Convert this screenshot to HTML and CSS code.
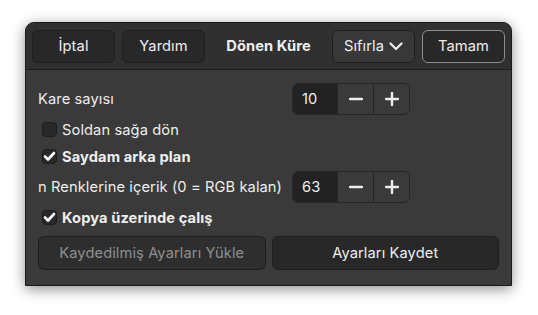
FILE: index.html
```html
<!DOCTYPE html>
<html lang="tr">
<head>
  <meta charset="UTF-8" />
  <title>Dönen Küre</title>
  <link rel="stylesheet" href="styles.css">
</head>
<body>

  <div class="window">
    <!-- Header bar -->
    <header class="headerbar">
      <button class="btn">İptal</button>
      <button class="btn">Yardım</button>
      <div class="title">Dönen Küre</div>
      <button class="btn btn-menu">Sıfırla
        <svg width="14" height="9" viewBox="0 0 14 9"><path d="M1.5 1.5 L7 7 L12.5 1.5" fill="none" stroke="#eee" stroke-width="2.2" stroke-linecap="round" stroke-linejoin="round"/></svg>
      </button>
      <button class="btn btn-default">Tamam</button>
    </header>

    <!-- Settings -->
    <div class="content">
      <div class="spin-row">
        <span class="label">Kare sayısı</span>
        <div class="spin">
          <span class="spin-value">10</span>
          <span class="spin-btn"><svg width="14" height="14" viewBox="0 0 14 14"><path d="M1 7 H13" stroke="#eee" stroke-width="2.4" stroke-linecap="round"/></svg></span>
          <span class="spin-btn"><svg width="14" height="14" viewBox="0 0 14 14"><path d="M1 7 H13 M7 1 V13" stroke="#eee" stroke-width="2.4" stroke-linecap="round"/></svg></span>
        </div>
      </div>

      <label class="check-row">
        <span class="check"></span>
        <span>Soldan sağa dön</span>
      </label>
      <label class="check-row bold">
        <span class="check"><svg width="13" height="11" viewBox="0 0 13 11"><path d="M2 5.5 L5 8.5 L11 2" fill="none" stroke="#fff" stroke-width="2.6" stroke-linecap="round" stroke-linejoin="round"/></svg></span>
        <span>Saydam arka plan</span>
      </label>

      <div class="spin-row">
        <span class="label">n Renklerine içerik (0 = RGB kalan)</span>
        <div class="spin">
          <span class="spin-value">63</span>
          <span class="spin-btn"><svg width="14" height="14" viewBox="0 0 14 14"><path d="M1 7 H13" stroke="#eee" stroke-width="2.4" stroke-linecap="round"/></svg></span>
          <span class="spin-btn"><svg width="14" height="14" viewBox="0 0 14 14"><path d="M1 7 H13 M7 1 V13" stroke="#eee" stroke-width="2.4" stroke-linecap="round"/></svg></span>
        </div>
      </div>

      <label class="check-row bold">
        <span class="check"><svg width="13" height="11" viewBox="0 0 13 11"><path d="M2 5.5 L5 8.5 L11 2" fill="none" stroke="#fff" stroke-width="2.6" stroke-linecap="round" stroke-linejoin="round"/></svg></span>
        <span>Kopya üzerinde çalış</span>
      </label>

      <div class="actions">
        <button class="btn" disabled>Kaydedilmiş Ayarları Yükle</button>
        <button class="btn">Ayarları Kaydet</button>
      </div>
    </div>
  </div>

</body>
</html>
```

FILE: styles.css
```css
html {
  background: #ffffff;
}

body {
  margin: 0;
  padding: 22px 0 29px 25px;
  min-height: 315px;
  box-sizing: border-box;
  font-family: Inter, "Noto Sans", sans-serif;
  font-size: 14.67px;
  letter-spacing: 0.1px;
  color: #eeeeee;
}

.window {
  width: 487px;
  height: 264px;
  box-sizing: border-box;
  border: 1px solid #1a1a1a;
  border-radius: 9px 9px 0 0;
  background: #3a3a3a;
  box-shadow: 0 3px 14px rgba(0, 0, 0, 0.45);
  overflow: hidden;
}

/* Header bar */
.headerbar {
  display: flex;
  align-items: center;
  gap: 7px;
  height: 46px;
  padding: 0 6px;
  background: #303030;
  border-bottom: 1px solid #1e1e1e;
}

.title {
  flex: 1;
  text-align: center;
  font-weight: 700;
}

.btn {
  font-family: inherit;
  font-size: 14.67px;
  letter-spacing: 0.1px;
  color: #eeeeee;
  height: 33px;
  background: #282828;
  border: 1px solid #1e1e1e;
  border-radius: 6px;
  padding: 0 10px;
}

.headerbar .btn {
  width: 83px;
  padding: 0;
}

.btn-menu {
  display: flex;
  align-items: center;
  justify-content: center;
  gap: 5px;
  background: #383838;
}

.headerbar .btn-default {
  border-color: #8c8c8c;
}

/* Content */
.content {
  display: flex;
  flex-direction: column;
  padding: 13px 12px 0 12px;
}

.spin-row {
  display: flex;
  align-items: center;
  gap: 11px;
  height: 32px;
}

.spin-row .label {
  width: 243px;
  white-space: nowrap;
}

.spin {
  display: flex;
  height: 32px;
  border: 1px solid #262626;
  border-radius: 6px;
  overflow: hidden;
  box-sizing: border-box;
}

.spin-value {
  width: 44px;
  padding-left: 9px;
  box-sizing: border-box;
  background: #222222;
  display: flex;
  align-items: center;
}

.spin-btn {
  width: 35px;
  display: flex;
  align-items: center;
  justify-content: center;
  border-left: 1px solid #262626;
  background: #3a3a3a;
}

.check-row {
  display: flex;
  align-items: center;
  gap: 5px;
  height: 27px;
  padding-left: 4px;
}

.check-row.bold {
  font-weight: 700;
}

.spin-row + .check-row {
  margin-top: 1px;
}

.check-row + .spin-row {
  margin-top: 1px;
}

.check {
  width: 15px;
  height: 15px;
  box-sizing: border-box;
  border: 1px solid #1c1c1c;
  border-radius: 4px;
  background: #282828;
  display: flex;
  align-items: center;
  justify-content: center;
}

.actions {
  display: grid;
  grid-template-columns: 1fr 1fr;
  gap: 6px;
  margin-top: 5px;
}

.actions .btn {
  height: 34px;
}

.actions .btn:disabled {
  color: #8e8e8e;
  background: #2e2e2e;
}
```
